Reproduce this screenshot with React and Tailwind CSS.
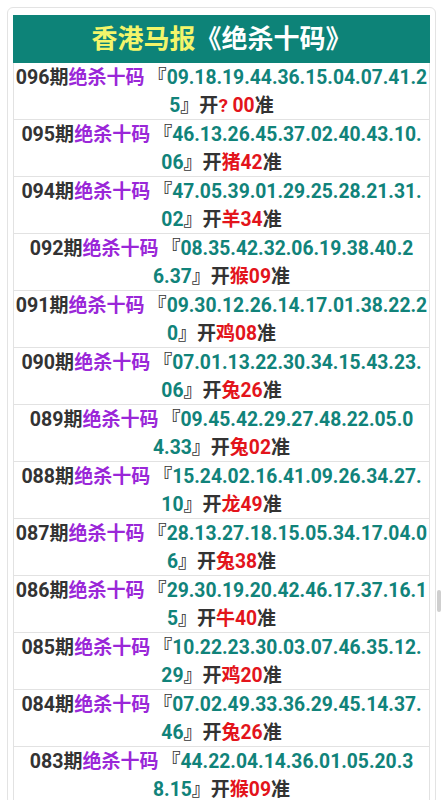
import React from "react";

const rows = [
  ["096", "09.18.19.44.36.15.04.07.41.2", "5", "? ", "00"],
  ["095", "46.13.26.45.37.02.40.43.10.", "06", "猪", "42"],
  ["094", "47.05.39.01.29.25.28.21.31.", "02", "羊", "34"],
  ["092", "08.35.42.32.06.19.38.40.2", "6.37", "猴", "09"],
  ["091", "09.30.12.26.14.17.01.38.22.2", "0", "鸡", "08"],
  ["090", "07.01.13.22.30.34.15.43.23.", "06", "兔", "26"],
  ["089", "09.45.42.29.27.48.22.05.0", "4.33", "兔", "02"],
  ["088", "15.24.02.16.41.09.26.34.27.", "10", "龙", "49"],
  ["087", "28.13.27.18.15.05.34.17.04.0", "6", "兔", "38"],
  ["086", "29.30.19.20.42.46.17.37.16.1", "5", "牛", "40"],
  ["085", "10.22.23.30.03.07.46.35.12.", "29", "鸡", "20"],
  ["084", "07.02.49.33.36.29.45.14.37.", "46", "兔", "26"],
  ["083", "44.22.04.14.36.01.05.20.3", "8.15", "猴", "09"],
];

export default function App() {
  return (
    <div
      className="relative h-[800px] w-[442px] overflow-hidden bg-white"
      style={{ fontFamily: 'Roboto, "Noto Sans CJK SC", sans-serif' }}
    >
      <div className="ml-[7px] mt-[7px] w-[429px] rounded-md border border-[#e3e3e3] px-[5px] pt-[7px]">
        <div className="flex h-[48px] items-center justify-center bg-[#0d8378] text-[26px] font-bold">
          <span className="text-[#f3f56a]">香港马报</span>
          <span className="text-white">《绝杀十码》</span>
        </div>
        <div className="border-x border-[#e2e2e2]">
          {rows.map(([q, a, b, z, n]) => (
            <div
              key={q}
              className="border-b border-[#e2e2e2] text-center text-[19px] font-bold leading-[28px] text-[#333]"
            >
              <div className="h-[28px] whitespace-nowrap pt-[1px]">
                <span className="text-[19.6px]">{q}</span>
                <span>期</span>
                <span className="text-[#9a27d8]">绝杀十码</span>
                <span className="ml-[3px]">『</span>
                <span className="text-[19.3px] text-[#11837a]">{a}</span>
              </div>
              <div className="h-[28px] whitespace-nowrap pt-[1px]">
                <span className="text-[19.3px] text-[#11837a]">{b}</span>
                <span>』开</span>
                <span className="text-[#e3141b]">{z}</span>
                <span className="text-[19.3px] text-[#e3141b]">{n}</span>
                <span>准</span>
              </div>
            </div>
          ))}
        </div>
      </div>
      <div className="absolute left-[437px] top-[590px] h-[22px] w-[4px] rounded-sm bg-[#cfcfcf]" />
    </div>
  );
}
